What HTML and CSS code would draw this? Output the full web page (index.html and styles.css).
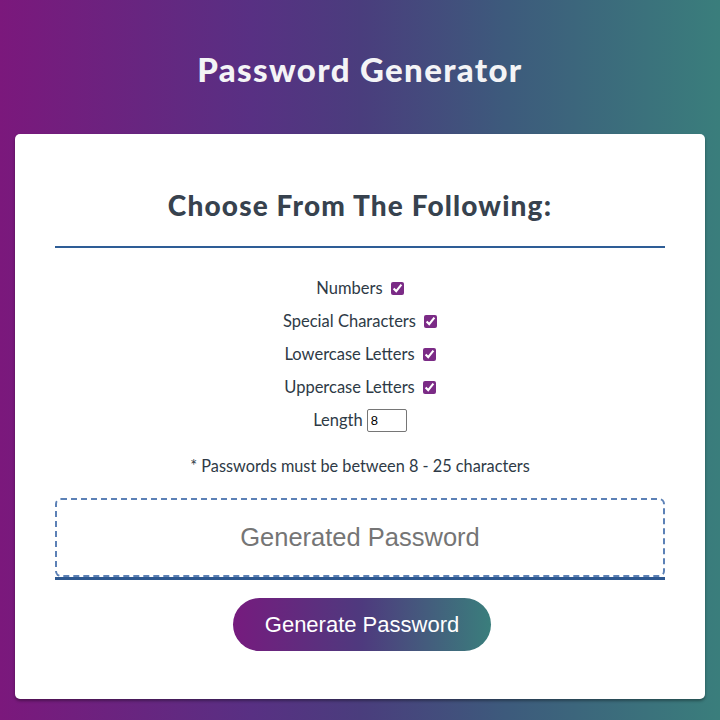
FILE: index.html
```html
<!DOCTYPE html>
<html lang="en">
<head>
<meta charset="utf-8">
<title>Password Generator</title>
<link rel="stylesheet" href="styles.css">
</head>
<body>
<header class="page-header">
  <h1 class="page-title">Password Generator</h1>
</header>
<main class="card">
  <h2 class="card-title">Choose From The Following:</h2>
  <div class="options">
    <label class="option">Numbers <input type="checkbox" checked></label>
    <label class="option">Special Characters <input type="checkbox" checked></label>
    <label class="option">Lowercase Letters <input type="checkbox" checked></label>
    <label class="option">Uppercase Letters <input type="checkbox" checked></label>
    <label class="option">Length <input class="length" type="text" value="8"></label>
  </div>
  <p class="note">* Passwords must be between 8 - 25 characters</p>
  <div class="output">
    <textarea class="password" readonly placeholder="Generated Password"></textarea>
  </div>
  <div class="actions">
    <button class="btn" type="button">Generate Password</button>
  </div>
</main>
</body>
</html>
```
FILE: styles.css
```css
* { box-sizing: border-box; }
html, body { margin: 0; padding: 0; }
body {
  width: 720px;
  height: 720px;
  overflow: hidden;
  background: linear-gradient(to right, #7b187c 0%, #583083 35%, #4a3d7d 50%, #3d5a7c 70%, #3a7e7c 100%);
  font-family: "Lato", "Open Sans", sans-serif;
  color: #2e3a46;
}
.page-header {
  height: 134px;
  display: flex;
  align-items: center;
  justify-content: center;
  padding-top: 4px;
}
.page-title {
  margin: 0;
  color: #f4f4f6;
  font-size: 33px;
  font-weight: 900;
  letter-spacing: 1.35px;
  line-height: 40px;
}
.card {
  margin: 0 15px;
  height: 565px;
  background: #fff;
  border-radius: 5px;
  box-shadow: 0 2px 3px rgba(0,0,0,0.35);
  padding: 54px 40px 0;
  display: flex;
  flex-direction: column;
}
.card-title {
  margin: 0;
  text-align: center;
  font-size: 28px;
  font-weight: 900;
  color: #37424e;
  letter-spacing: 1.15px;
  padding-bottom: 24px;
  border-bottom: 2px solid #2e5d96;
  line-height: 34px;
}
.options {
  display: flex;
  flex-direction: column;
  align-items: center;
  gap: 11px;
  margin-top: 29px;
}
.option {
  display: flex;
  align-items: center;
  gap: 8px;
  font-size: 16.5px;
  line-height: 22px;
  height: 22px;
}
.option input[type="checkbox"] {
  margin: 0;
  width: 13px;
  height: 13px;
  accent-color: #7b2b86;
}
.length {
  width: 40px;
  height: 23px;
  margin: 0;
  margin-left: -4px;
  padding: 1px 3px;
  font-family: "Liberation Sans", sans-serif;
  font-size: 13px;
  color: #000;
  border: 1px solid #767676;
  border-radius: 2px;
}
.note {
  margin: 25px 0 0;
  text-align: center;
  font-size: 16.3px;
  line-height: 20px;
}
.output {
  margin-top: 22px;
  border-bottom: 3px solid #2e5890;
}
.password {
  display: block;
  width: 100%;
  height: 79px;
  resize: none;
  border: 2px dashed #5c81b6;
  border-radius: 6px;
  padding: 22px 10px;
  text-align: center;
  font-family: "Liberation Sans", Arial, sans-serif;
  font-size: 25.5px;
  line-height: 30px;
  color: #333;
  outline: none;
}
.password::placeholder { color: #757575; }
.actions {
  display: flex;
  justify-content: center;
  margin-top: 18px;
  padding-left: 4px;
}
.btn {
  width: 258px;
  height: 53px;
  border: none;
  border-radius: 27px;
  background: linear-gradient(to right, #761b7e 0%, #4e3a7e 50%, #3a7e7c 100%);
  color: #fff;
  font-family: "Liberation Sans", Arial, sans-serif;
  font-size: 22px;
  cursor: pointer;
}
```
